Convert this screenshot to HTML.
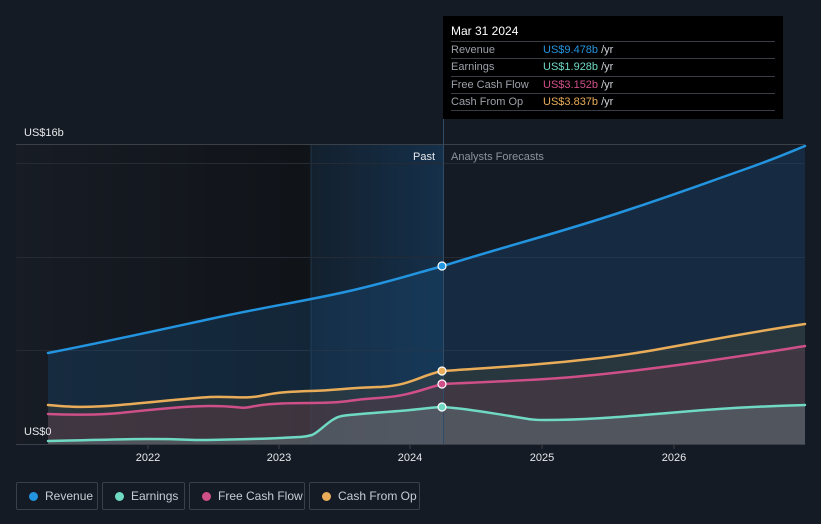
<!DOCTYPE html>
<html><head><meta charset="utf-8"><style>
html,body{margin:0;padding:0;background:#151b25;width:821px;height:524px;overflow:hidden;font-family:"Liberation Sans",sans-serif}
.tt{position:absolute;left:443px;top:16px;width:340px;height:103px;background:#000}
.tt .h{position:absolute;left:8px;top:8px;color:#fff;font-size:12px}
.tt .r{position:absolute;left:8px;width:324px;height:17px;border-top:1px solid #3a3d44;font-size:11px;color:#9ca0a8;line-height:17px}
.tt .r span{position:absolute;left:92px}
.tt .r i{font-style:normal;color:#cfd2d8}
.leg{position:absolute;top:482px;height:28px;border:1px solid #3a404b;border-radius:2px;box-sizing:border-box;color:#c8ccd3;font-size:12px;line-height:26px;padding-left:28px;white-space:nowrap;overflow:hidden}
.leg b{position:absolute;left:12px;top:9px;width:9px;height:9px;border-radius:50%}
</style></head><body>
<svg width="821" height="524" style="position:absolute;left:0;top:0">
<defs>
<linearGradient id="past" x1="0" x2="1"><stop offset="0" stop-color="#171c25"/><stop offset="1" stop-color="#101318"/></linearGradient>
<linearGradient id="hl" x1="0" x2="1"><stop offset="0" stop-color="#13202e"/><stop offset="1" stop-color="#15304a"/></linearGradient>
</defs>
<rect x="16" y="144" width="295" height="300" fill="url(#past)"/>
<rect x="311" y="144" width="132" height="300" fill="url(#hl)"/>
<line x1="311" y1="144" x2="311" y2="444" stroke="#22364a"/>
<line x1="16" y1="144.5" x2="805" y2="144.5" stroke="#3a3f48"/>
<line x1="16" y1="163.5" x2="805" y2="163.5" stroke="#252b35"/>
<line x1="16" y1="257.5" x2="805" y2="257.5" stroke="#252b35"/>
<line x1="16" y1="350.5" x2="805" y2="350.5" stroke="#252b35"/>
<path d="M48,353 C100,343 150,332 210,319 S300,302 345,292 S420,272 443,266 C500,248 540,238 600,219 S700,185 740,171 S790,152 805,146 L805,444 L48,444Z" fill="#1a4a75" fill-opacity="0.35"/>
<path d="M48,405 C70,407 85,408 120,405 S190,398 210,397 S245,399 260,396 S280,392 310,391 S345,388 378,387 S420,375 443,371 C500,367 540,365 600,358 S700,340 805,324 L805,444 L48,444Z" fill="#4a4a3a" fill-opacity="0.35"/>
<path d="M48,414 C70,415 100,415 120,413 S180,406 210,406 S240,409 250,407 S270,403 310,403 S345,400 378,398 S425,388 443,384 C480,382 520,381 560,378 S650,369 700,362 S780,350 805,346 L805,444 L48,444Z" fill="#6a3a4a" fill-opacity="0.35"/>
<path d="M48,441 C100,440 120,439 150,439 S190,440 200,440 S260,439 280,438 S305,437 312,435 C320,432 330,418 342,416 S390,412 410,410 S435,407 443,407 C470,409 490,413 510,416 S530,420 545,420 C580,420 610,418 680,412 S780,406 805,405 L805,444 L48,444Z" fill="#7a9a9a" fill-opacity="0.3"/>
<g fill="none" stroke-width="2.5" stroke-linecap="round">
<path d="M48,353 C100,343 150,332 210,319 S300,302 345,292 S420,272 443,266 C500,248 540,238 600,219 S700,185 740,171 S790,152 805,146" stroke="#2394df"/>
<path d="M48,405 C70,407 85,408 120,405 S190,398 210,397 S245,399 260,396 S280,392 310,391 S345,388 378,387 S420,375 443,371 C500,367 540,365 600,358 S700,340 805,324" stroke="#e9ad5a"/>
<path d="M48,414 C70,415 100,415 120,413 S180,406 210,406 S240,409 250,407 S270,403 310,403 S345,400 378,398 S425,388 443,384 C480,382 520,381 560,378 S650,369 700,362 S780,350 805,346" stroke="#cf4f88"/>
<path d="M48,441 C100,440 120,439 150,439 S190,440 200,440 S260,439 280,438 S305,437 312,435 C320,432 330,418 342,416 S390,412 410,410 S435,407 443,407 C470,409 490,413 510,416 S530,420 545,420 C580,420 610,418 680,412 S780,406 805,405" stroke="#6fd9c4"/>
</g>
<line x1="443.5" y1="16" x2="443.5" y2="444" stroke="#2f4b66"/>
<line x1="16" y1="444.5" x2="805" y2="444.5" stroke="#3a3f48"/>
<g stroke="#3a3f48"><line x1="148" y1="444" x2="148" y2="449"/><line x1="279" y1="444" x2="279" y2="449"/><line x1="410" y1="444" x2="410" y2="449"/><line x1="542" y1="444" x2="542" y2="449"/><line x1="674" y1="444" x2="674" y2="449"/></g>
<g stroke="#fff" stroke-width="1.2"><circle cx="442" cy="266" r="4" fill="#2394df"/><circle cx="442" cy="371" r="4" fill="#e9ad5a"/><circle cx="442" cy="384" r="4" fill="#cf4f88"/><circle cx="442" cy="407" r="4" fill="#6fd9c4"/></g>
<g font-family="Liberation Sans" font-size="11" fill="#e6e8eb" text-anchor="middle">
<text x="148" y="461">2022</text><text x="279" y="461">2023</text><text x="410" y="461">2024</text><text x="542" y="461">2025</text><text x="674" y="461">2026</text>
</g>
<text x="24" y="136" font-family="Liberation Sans" font-size="11" fill="#e6e8eb">US$16b</text>
<text x="24" y="435" font-family="Liberation Sans" font-size="11" fill="#e6e8eb">US$0</text>
<text x="435" y="160" font-family="Liberation Sans" font-size="11" fill="#e6e8eb" text-anchor="end">Past</text>
<text x="451" y="160" font-family="Liberation Sans" font-size="11" fill="#8e939b">Analysts Forecasts</text>
</svg>
<div class="tt">
<div class="h">Mar 31 2024</div>
<div class="r" style="top:25px">Revenue<span style="color:#2394df">US$9.478b <i>/yr</i></span></div>
<div class="r" style="top:42px">Earnings<span style="color:#6fd9c4">US$1.928b <i>/yr</i></span></div>
<div class="r" style="top:60px">Free Cash Flow<span style="color:#cf4f88">US$3.152b <i>/yr</i></span></div>
<div class="r" style="top:77px;height:16px;border-bottom:1px solid #3a3d44">Cash From Op<span style="color:#e9ad5a">US$3.837b <i>/yr</i></span></div>
</div>
<div class="leg" style="left:16px;width:82px"><b style="background:#2394df"></b>Revenue</div>
<div class="leg" style="left:102px;width:83px"><b style="background:#6fd9c4"></b>Earnings</div>
<div class="leg" style="left:189px;width:116px"><b style="background:#cf4f88"></b>Free Cash Flow</div>
<div class="leg" style="left:309px;width:111px"><b style="background:#e9ad5a"></b>Cash From Op</div>
</body></html>
